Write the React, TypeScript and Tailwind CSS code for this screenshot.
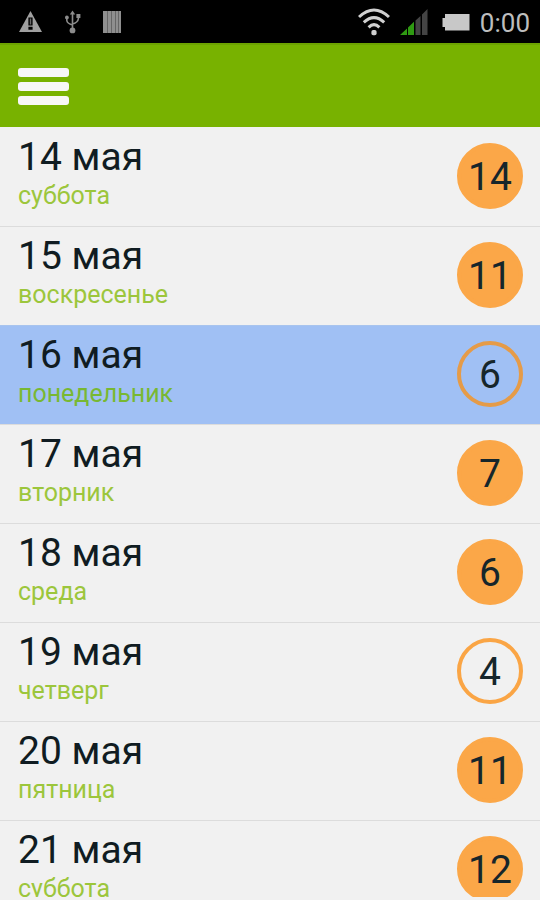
type Day = {
  date: string;
  weekday: string;
  count: number;
  outlined?: boolean;
  selected?: boolean;
};

const days: Day[] = [
  { date: "14 мая", weekday: "суббота", count: 14 },
  { date: "15 мая", weekday: "воскресенье", count: 11 },
  { date: "16 мая", weekday: "понедельник", count: 6, outlined: true, selected: true },
  { date: "17 мая", weekday: "вторник", count: 7 },
  { date: "18 мая", weekday: "среда", count: 6 },
  { date: "19 мая", weekday: "четверг", count: 4, outlined: true },
  { date: "20 мая", weekday: "пятница", count: 11 },
  { date: "21 мая", weekday: "суббота", count: 12 },
];

function WarningIcon() {
  return (
    <svg width="24" height="22" viewBox="0 0 24 22" aria-hidden="true">
      <path d="M11.5 0 L23 21 H0 Z" fill="#a0a0a0" />
      <path d="M9.4 6.5 h4.2 v8 h-4.2 Z M9.4 15.8 h4.2 v3 h-4.2 Z" fill="#000" />
      <path d="M10.8 7.5 h1.4 v6 h-1.4 Z" fill="#6a6a6a" />
    </svg>
  );
}

function UsbIcon() {
  return (
    <svg width="16" height="24" viewBox="0 0 16 24" fill="none" stroke="#8c8c8c" strokeWidth="1.6" aria-hidden="true">
      <path d="M7.5 3 V20 M1.8 8 V10.5 Q2.2 13.5 7.5 15 M13.4 6 V8.5 Q13 12.5 7.5 14" />
      <path d="M7.5 0.5 L10.2 4.5 H4.8 Z" fill="#8c8c8c" stroke="none" />
      <circle cx="1.9" cy="7.4" r="1.9" fill="#8c8c8c" stroke="none" />
      <rect x="11.4" y="4" width="4" height="4" fill="#8c8c8c" stroke="none" />
      <circle cx="7.5" cy="20.4" r="2.9" fill="#8c8c8c" stroke="none" />
    </svg>
  );
}

function BarsIcon() {
  return (
    <svg width="18" height="22" viewBox="0 0 18 22" aria-hidden="true">
      <rect width="18" height="22" fill="#8f8f8f" />
      <path d="M4.5 0 V22 M8.5 0 V22 M12.5 0 V22 M15.5 0 V22" stroke="#666" />
    </svg>
  );
}

function WifiIcon() {
  return (
    <svg width="32" height="28" viewBox="0 0 32 28" fill="none" stroke="#d0d0d0" aria-hidden="true">
      <path d="M1 9 Q16 -5 31 9" strokeWidth="3" />
      <path d="M5.8 14.4 Q16 4.8 26.2 14.4" strokeWidth="3" />
      <path d="M10.6 19.4 Q16 14 21.4 19.4" strokeWidth="3" />
      <rect x="13.4" y="22" width="5.2" height="5.2" rx="1.8" fill="#d0d0d0" stroke="none" />
    </svg>
  );
}

function SignalIcon() {
  return (
    <svg width="28" height="26" viewBox="0 0 28 26" aria-hidden="true">
      <path d="M0 26 L7 19.5 V26 Z M8 18.5 L14 12.8 V26 H8 Z" fill="#2f9a12" />
      <path d="M15.5 11.5 L20.5 7 V26 H15.5 Z M22 5.4 L27.5 0 V26 H22 Z" fill="#444" />
    </svg>
  );
}

function BatteryIcon() {
  return (
    <svg width="28" height="18" viewBox="0 0 28 18" aria-hidden="true">
      <path d="M3 1 H27.5 V17.5 H3 V14 H0.5 V5 H3 Z" fill="#c8c8c8" />
    </svg>
  );
}

function StatusBar() {
  return (
    <div className="flex h-[43px] shrink-0 items-center justify-between bg-black pr-2.5 pl-[19px]">
      <div className="flex items-center gap-[22px]">
        <WarningIcon />
        <UsbIcon />
        <BarsIcon />
      </div>
      <div className="flex items-center">
        <WifiIcon />
        <span className="ml-2.5">
          <SignalIcon />
        </span>
        <span className="ml-3.5">
          <BatteryIcon />
        </span>
        <span className="ml-2.5 pt-0.5 text-[26px] leading-8 text-[#bdbdbd]">0:00</span>
      </div>
    </div>
  );
}

function Header() {
  return (
    <header className="flex h-[84px] shrink-0 items-center border-t-2 border-[#6da300] bg-[#78b200] px-[18px]">
      <button type="button" aria-label="Меню" className="flex w-[51px] flex-col gap-[5px]">
        <span className="h-[9px] rounded-[3px] bg-[#f7f7f7]" />
        <span className="h-[9px] rounded-[3px] bg-[#f7f7f7]" />
        <span className="h-[9px] rounded-[3px] bg-[#f7f7f7]" />
      </button>
    </header>
  );
}

function DayRow({ day }: { day: Day }) {
  return (
    <li
      className={`flex h-[99px] items-center justify-between border-t pr-[17px] pb-0.5 pl-[18px] first:border-[#f1f1f1] ${
        day.selected ? "border-[#a8c4ee] bg-[#a0c0f4]" : "border-[#dcdcdc] bg-[#f1f1f1]"
      }`}
    >
      <div className="pb-2">
        <p className="text-[39px] leading-[48px] text-[#101c22]">{day.date}</p>
        <p className={`text-[25px] leading-[30px] ${day.selected ? "text-[#78b832]" : "text-[#9cc63c]"}`}>
          {day.weekday}
        </p>
      </div>
      <span
        className={`flex size-[66px] items-center justify-center rounded-full border-4 pt-0.5 text-[39px] leading-none text-[#16262b] ${
          day.outlined
            ? day.selected
              ? "border-[#e59b48]"
              : "border-[#faa545]"
            : "border-[#fba748] bg-[#fba748]"
        }`}
      >
        {day.count}
      </span>
    </li>
  );
}

export default function App() {
  return (
    <div className="flex h-screen flex-col bg-[#f1f1f1] pb-[3px] font-['Roboto',sans-serif]">
      <StatusBar />
      <Header />
      <ul className="min-h-0 flex-1 overflow-y-auto [scrollbar-width:none]">
        {days.map((day) => (
          <DayRow key={day.date} day={day} />
        ))}
      </ul>
    </div>
  );
}
